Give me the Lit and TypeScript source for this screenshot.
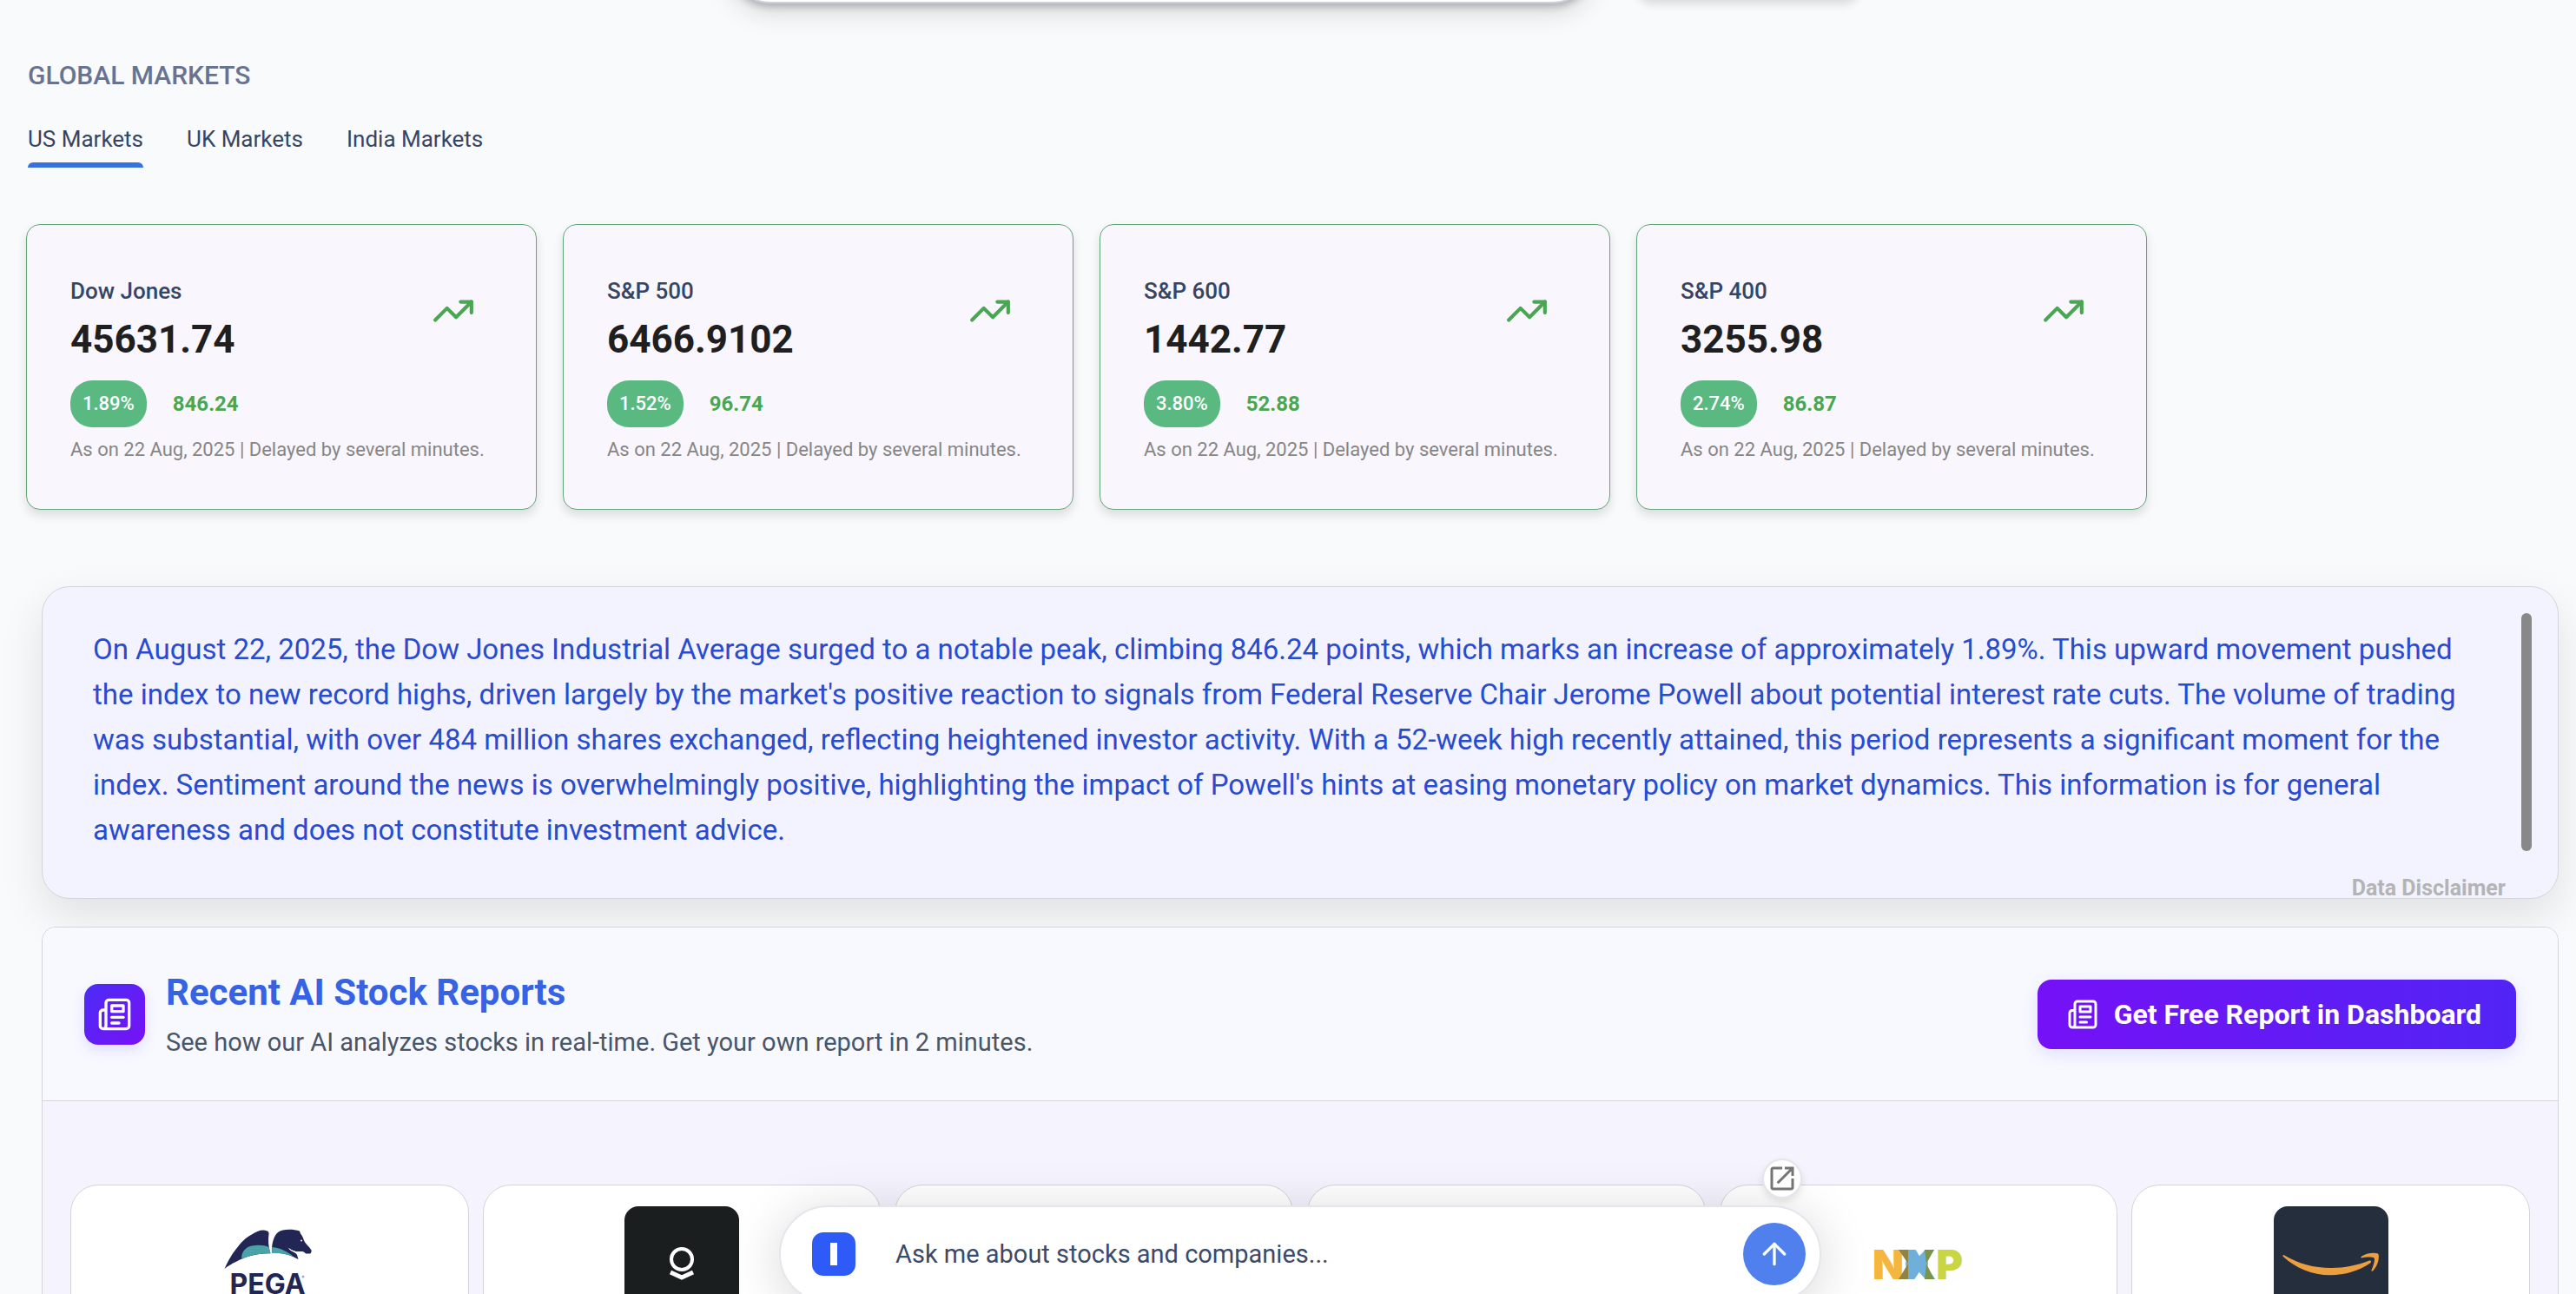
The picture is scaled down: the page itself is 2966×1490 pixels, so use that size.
import { LitElement, html, svg, css } from "lit";
import { customElement, property, state } from "lit/decorators.js";
import { classMap } from "lit/directives/class-map.js";

const newspaper = svg`
  <path d="M4 22h16a2 2 0 0 0 2-2V4a2 2 0 0 0-2-2H8a2 2 0 0 0-2 2v16a2 2 0 0 1-2 2Zm0 0a2 2 0 0 1-2-2v-9c0-1.1.9-2 2-2h2"/>
  <path d="M18 14h-8"/><path d="M15 18h-5"/><path d="M10 6h8v4h-8V6Z"/>`;

interface Quote {
  name: string;
  value: string;
  percent: string;
  change: string;
}

@customElement("index-card")
class IndexCard extends LitElement {
  @property({ attribute: false }) quote!: Quote;

  static styles = css`
    :host { display: block; min-width: 588px; }
    .card {
      box-sizing: border-box;
      height: 100%;
      padding: 60px 50px 52px;
      border: 1px solid #62a878;
      border-radius: 16px;
      background: #f9f6fe;
      box-shadow: 0 6px 12px rgba(0, 0, 0, 0.12);
    }
    .top { display: flex; justify-content: space-between; align-items: center; padding-right: 20px; }
    .name { margin: 0; font-size: 26px; font-weight: 500; line-height: 32px; color: #364566; }
    .value { margin: 0; font-size: 44px; font-weight: 700; line-height: 80px; color: #1f1f1f; }
    .trend { width: 50px; height: 50px; margin-bottom: 34px; fill: none; stroke: #4aa653; stroke-width: 2; stroke-linecap: round; stroke-linejoin: round; }
    .row { display: flex; align-items: center; gap: 30px; margin-top: 7px; }
    .pill { padding: 0 14px; border-radius: 25px; background: #59b981; color: #fff; font-size: 22px; font-weight: 500; line-height: 54px; }
    .change { color: #4aa653; font-size: 24px; font-weight: 700; line-height: 32px; }
    .note { margin: 10px 0 0; font-size: 22px; line-height: 32px; color: #868686; white-space: nowrap; }
  `;

  render() {
    const q = this.quote;
    return html`<article class="card">
      <div class="top">
        <div>
          <h3 class="name">${q.name}</h3>
          <p class="value">${q.value}</p>
        </div>
        <svg class="trend" viewBox="0 0 24 24" aria-hidden="true">
          <path d="M22 7 13.5 15.5 8.5 10.5 2 17"/><path d="M16 7h6v6"/>
        </svg>
      </div>
      <div class="row"><span class="pill">${q.percent}</span><span class="change">${q.change}</span></div>
      <p class="note">As on 22 Aug, 2025 | Delayed by several minutes.</p>
    </article>`;
  }
}

const logos: Record<string, unknown> = {
  pega: html`<svg class="logo" viewBox="0 0 132 132" role="img" aria-label="Pega">
    <path fill="#222654" d="M14.5 72C20 60 24 54 28 49C34 41 39 36 45 33C51 29 56 27 61 27.700C64 28 66 29 65.500 32C64.500 39 65 47 67.500 54.300C52 54 38 58 28 63.700C23 66 18 69 14.500 72Z"/>
    <path fill="#222654" d="M69 54C68.500 44 71 34 76 30C81 26 93 26 101 28.500L102 31.500C104 34 105 36 105.500 38C107 43 112 46 114.500 50.500C115 52 114 54 113 54.500L108 54.500C106 52 104 52 103 52C97 53 92 51 88.500 48.300C90 52 97 53 98 56L99.500 61C90 56 81 53 69 54Z"/>
    <path fill="#49a3a8" d="M34.500 61C33 54 38 47 46 45.500C53 44 61 44.500 65.500 47L67.500 54.300C55 54 44 56 34.500 61Z"/>
    <path fill="#49a3a8" d="M69.200 47C79 48 87 52 94 58C86 55 79 53.500 69 54Z"/>
    <path d="M88.500 48.500C92 52 98 53.500 103 52.500" fill="none" stroke="#fff" stroke-width="1"/>
    <circle cx="103" cy="39.500" r="1" fill="#fff"/>
    <text x="64" y="101" text-anchor="middle" font-family="Inter" font-weight="700" font-size="32" fill="#222654">PEGA</text>
    <circle cx="105" cy="81" r="1.500" fill="#a9abc0"/>
  </svg>`,
  palantir: html`<svg class="logo" viewBox="0 0 132 132" role="img" aria-label="Palantir">
    <rect width="132" height="132" fill="#1b1e1f"/>
    <circle cx="66" cy="61" r="12" fill="none" stroke="#fff" stroke-width="4"/>
    <path d="M53 76 66 82 79 76" fill="none" stroke="#fff" stroke-width="5"/>
  </svg>`,
  nxp: html`<svg class="logo" viewBox="0 0 132 132" role="img" aria-label="NXP">
    <text x="65" y="84" text-anchor="middle" font-family="Inter" font-weight="900" font-size="47"><tspan fill="#f5b63f">N</tspan><tspan fill="#70afda">X</tspan><tspan fill="#c9d642">P</tspan></text>
    <path fill="#70afda" d="M54 50 64 60 74 50 77 66 74 84 64 73 54 84 51 66Z"/>
    <path fill="#8f8444" d="M43 50H54V66ZM54 66V84H43Z"/>
    <path fill="#7b9446" d="M73 50H84L75 66ZM75 66 84 84H73Z"/>
  </svg>`,
  amazon: html`<svg class="logo" viewBox="0 0 132 132" role="img" aria-label="Amazon">
    <rect width="132" height="132" fill="#252e3d"/>
    <path fill="#eb9f3f" d="M11.500 56C28 66 46 71 66 71C82 71 96 68 110 62.500C112 62 113 64 111 65.500C99 74 82 79.300 65 79.300C44 79.300 25 71 11 58C10 57 10.500 55.500 11.500 56Z"/>
    <path fill="#eb9f3f" d="M100 58.500C106 54 115 53 120 54.500C122 56 121 68 114 74.500C113 75 112 74.500 112.500 73.500C115 68 117 61 115.500 59.500C113 58 106 58.500 101 59.500Z"/>
  </svg>`,
};

@customElement("stock-reports")
class StockReports extends LitElement {
  static styles = css`
    :host { display: block; }
    .panel { border: 1px solid #d4d5d9; border-radius: 16px 16px 0 0; background: #f5f3fe; overflow: hidden; }
    .head { display: flex; align-items: center; justify-content: space-between; height: 199px; padding: 0 48px; border-bottom: 1px solid #d4d5d9; background: #f8f9ff; }
    .intro { display: flex; align-items: center; gap: 24px; }
    .words { padding-top: 8px; }
    .badge { display: grid; place-items: center; width: 70px; height: 70px; border-radius: 16px; background: linear-gradient(135deg, #4a2cf6, #7811f5); box-shadow: 0 6px 16px rgba(80, 60, 245, 0.14); }
    .icon { fill: none; stroke: #fff; stroke-width: 2; stroke-linecap: round; stroke-linejoin: round; }
    .badge .icon { width: 40px; height: 40px; }
    .cta .icon { width: 36px; height: 36px; }
    .title { margin: 0; font-size: 42px; font-weight: 700; line-height: 56px; color: #3563e4; }
    .sub { margin: 0; font-size: 29px; line-height: 58px; color: #4a5567; }
    .cta { display: flex; align-items: center; gap: 18px; height: 80px; padding: 0 40px 0 34px; border: 0; border-radius: 16px; background: linear-gradient(90deg, #7511f6, #5224f5); box-shadow: 0 6px 20px rgba(80, 80, 245, 0.14); color: #fff; font-family: inherit; font-size: 32px; font-weight: 700; }
    .grid { display: grid; grid-template-columns: repeat(6, 1fr); gap: 16px; padding: 96px 32px 0; }
    .stock { display: flex; justify-content: center; height: 320px; padding-top: 24px; border: 1px solid #d4d5d9; border-radius: 32px; background: #fff; box-sizing: border-box; }
    .logo { width: 132px; height: 132px; border-radius: 16px; }
  `;

  render() {
    const stocks = ["pega", "palantir", "", "", "nxp", "amazon"];
    return html`<section class="panel">
      <header class="head">
        <div class="intro">
          <span class="badge"><svg class="icon" viewBox="0 0 24 24" aria-hidden="true">${newspaper}</svg></span>
          <div class="words">
            <h2 class="title">Recent AI Stock Reports</h2>
            <p class="sub">See how our AI analyzes stocks in real-time. Get your own report in 2 minutes.</p>
          </div>
        </div>
        <button class="cta" type="button">
          <svg class="icon" viewBox="0 0 24 24" aria-hidden="true">${newspaper}</svg>
          Get Free Report in Dashboard
        </button>
      </header>
      <div class="grid">${stocks.map((s) => html`<article class="stock">${logos[s] ?? ""}</article>`)}</div>
    </section>`;
  }
}

@customElement("chat-bar")
class ChatBar extends LitElement {
  static styles = css`
    :host { display: block; }
    .bar { position: relative; display: flex; align-items: center; box-sizing: border-box; height: 112px; padding: 0 16px 0 36px; border: 2px solid #e5e6eb; border-radius: 56px; background: #fff; box-shadow: 0 8px 60px rgba(0, 0, 0, 0.16); }
    .mark { flex: none; width: 50px; height: 50px; }
    .field { flex: 1; min-width: 0; height: 60px; margin-left: 46px; padding: 0; border: 0; outline: 0; background: none; font-family: inherit; font-size: 29px; color: #3c4a69; }
    .field::placeholder { color: #3c4a69; opacity: 1; }
    .send { display: grid; place-items: center; width: 72px; height: 72px; padding: 0; border: 0; border-radius: 50%; background: #4f80ee; }
    .send svg { width: 40px; height: 40px; fill: none; stroke: #fff; stroke-width: 2; stroke-linecap: round; stroke-linejoin: round; }
    .pop { position: absolute; right: 20px; top: -56px; display: grid; place-items: center; width: 46px; height: 46px; padding: 0; border: 2px solid #e5e6eb; border-radius: 50%; background: #fff; box-shadow: 0 4px 8px rgba(0, 0, 0, 0.1); box-sizing: border-box; }
    .pop svg { width: 36px; height: 36px; fill: #757575; }
  `;

  render() {
    return html`<form class="bar" @submit=${(e: Event) => e.preventDefault()}>
      <svg class="mark" viewBox="0 0 50 50" aria-hidden="true">
        <rect width="50" height="50" rx="13" fill="#2e5bf8"/><rect x="21" y="12" width="8" height="26" fill="#fff"/>
      </svg>
      <input class="field" type="text" aria-label="Ask me about stocks and companies" placeholder="Ask me about stocks and companies..." />
      <button class="send" type="submit" aria-label="Send">
        <svg viewBox="0 0 24 24" aria-hidden="true"><path d="M12 19V5"/><path d="m5 12 7-7 7 7"/></svg>
      </button>
      <button class="pop" type="button" aria-label="Open in new window">
        <svg viewBox="0 0 24 24" aria-hidden="true"><path d="M19 19H5V5h7V3H5c-1.110 0-2 .9-2 2v14c0 1.100.89 2 2 2h14c1.100 0 2-.9 2-2v-7h-2v7zM14 3v2h3.590l-9.830 9.830 1.410 1.410L19 6.410V10h2V3h-7z"/></svg>
      </button>
    </form>`;
  }
}

@customElement("app-root")
class AppRoot extends LitElement {
  @state() private market = "US Markets";

  private quotes: Quote[] = [
    { name: "Dow Jones", value: "45631.74", percent: "1.89%", change: "846.24" },
    { name: "S&P 500", value: "6466.9102", percent: "1.52%", change: "96.74" },
    { name: "S&P 600", value: "1442.77", percent: "3.80%", change: "52.88" },
    { name: "S&P 400", value: "3255.98", percent: "2.74%", change: "86.87" },
  ];

  static styles = css`
    :host { display: block; position: relative; height: 100vh; overflow: hidden; background: #f8fafc; font-family: Roboto, "Liberation Sans", sans-serif; }
    .search { position: absolute; left: 50%; top: -96px; width: 1000px; height: 100px; margin-left: -646px; box-sizing: border-box; border: 2px solid #cdd0da; border-radius: 50px; background: #fff; box-shadow: 0 4px 8px rgba(0, 0, 0, 0.22), 0 10px 30px rgba(0, 0, 0, 0.14); }
    .search-action { position: absolute; left: 50%; top: -84px; width: 254px; height: 80px; margin-left: 403px; border-radius: 16px; box-shadow: 0 8px 12px rgba(0, 0, 0, 0.14); }
    .markets { padding: 68px 30px 0; }
    .heading { margin: 0 0 0 2px; font-size: 30px; font-weight: 500; line-height: 38px; color: #68738f; }
    .tabs { display: flex; gap: 50px; margin-left: 2px; margin-top: 34px; }
    .tab { padding: 0 0 6px; border: 0; background: none; font-family: inherit; font-size: 26px; line-height: 40px; color: #364566; }
    .tab::after { content: ""; display: block; height: 6px; margin-top: 7px; margin-bottom: -6px; border-radius: 6px 6px 0 0; }
    .tab.active::after { background: #3771e0; }
    .cards { display: flex; gap: 30px; margin-top: 65px; }
    .summary { display: grid; grid-template-columns: 1fr auto; margin: 88px 20px 0 48px; padding: 30px 30px 0 58px; border: 1px solid #d4d5d9; border-radius: 32px; background: #f3f3ff; box-shadow: 0 20px 50px rgba(0, 0, 0, 0.1); }
    .text { margin: 0; padding: 16px 60px 0 0; font-size: 33px; line-height: 52px; color: #284bcf; }
    .thumb { width: 12px; height: 274px; border-radius: 6px; background: #888; }
    .disclaimer { grid-column: 1 / -1; justify-self: end; margin: 30px 30px 0 0; font-size: 25px; font-weight: 700; line-height: 22px; color: #b4b4b4; text-decoration: none; }
    .reports { display: block; position: relative; margin: 32px 20px 0 48px; }
    .chat { position: absolute; left: 50%; bottom: -10px; width: 1200px; margin-left: -586px; }
  `;

  render() {
    const tabs = ["US Markets", "UK Markets", "India Markets"];
    return html`
      <div class="search"></div>
      <div class="search-action"></div>
      <main>
        <section class="markets">
          <h1 class="heading">GLOBAL MARKETS</h1>
          <div class="tabs" role="tablist">
            ${tabs.map((t) => html`<button type="button" role="tab" aria-selected=${t === this.market}
              class=${classMap({ tab: true, active: t === this.market })}
              @click=${() => (this.market = t)}>${t}</button>`)}
          </div>
          <div class="cards">${this.quotes.map((q) => html`<index-card .quote=${q}></index-card>`)}</div>
        </section>
        <section class="summary">
          <p class="text">On August 22, 2025, the Dow Jones Industrial Average surged to a notable peak, climbing 846.24 points, which marks an increase of approximately 1.89%. This upward movement pushed the index to new record highs, driven largely by the market's positive reaction to signals from Federal Reserve Chair Jerome Powell about potential interest rate cuts. The volume of trading was substantial, with over 484 million shares exchanged, reflecting heightened investor activity. With a 52-week high recently attained, this period represents a significant moment for the index. Sentiment around the news is overwhelmingly positive, highlighting the impact of Powell's hints at easing monetary policy on market dynamics. This information is for general awareness and does not constitute investment advice.</p>
          <div class="thumb"></div>
          <a class="disclaimer" href="#disclaimer">Data Disclaimer</a>
        </section>
        <stock-reports class="reports"></stock-reports>
      </main>
      <chat-bar class="chat"></chat-bar>
    `;
  }
}
